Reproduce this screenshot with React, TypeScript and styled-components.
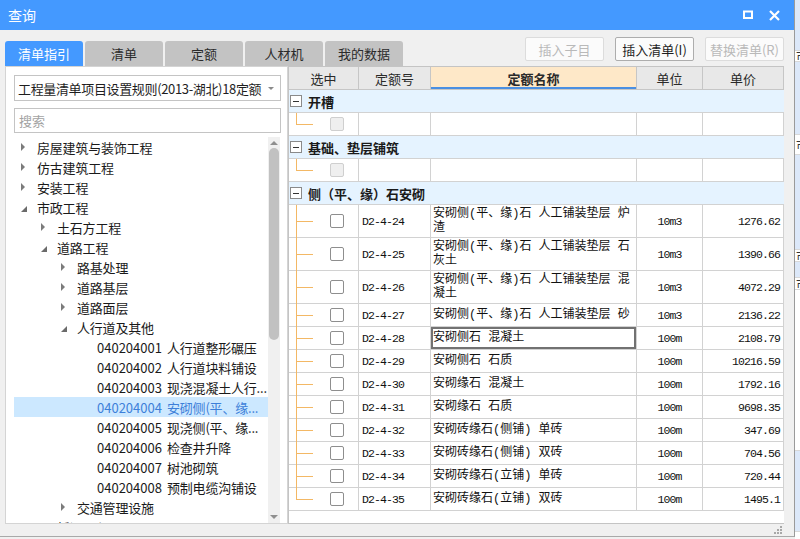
import React from "react";
import styled, { createGlobalStyle } from "styled-components";

const GlobalStyle = createGlobalStyle`
  html, body {
    margin: 0;
    padding: 0;
  }
  body {
    width: 800px;
    height: 539px;
    overflow: hidden;
    background: #f0f0f0;
    font-family: "Noto Sans CJK SC", "Noto Sans", sans-serif;
  }
`;

type TreeItem = {
  level: number;
  label: string;
  code?: string;
  state?: "open" | "closed";
  selected?: boolean;
};

const treeItems: TreeItem[] = [
  { level: 1, label: "房屋建筑与装饰工程", state: "closed" },
  { level: 1, label: "仿古建筑工程", state: "closed" },
  { level: 1, label: "安装工程", state: "closed" },
  { level: 1, label: "市政工程", state: "open" },
  { level: 2, label: "土石方工程", state: "closed" },
  { level: 2, label: "道路工程", state: "open" },
  { level: 3, label: "路基处理", state: "closed" },
  { level: 3, label: "道路基层", state: "closed" },
  { level: 3, label: "道路面层", state: "closed" },
  { level: 3, label: "人行道及其他", state: "open" },
  { level: 4, code: "040204001", label: "人行道整形碾压" },
  { level: 4, code: "040204002", label: "人行道块料铺设" },
  { level: 4, code: "040204003", label: "现浇混凝土人行..." },
  { level: 4, code: "040204004", label: "安砌侧(平、缘...", selected: true },
  { level: 4, code: "040204005", label: "现浇侧(平、缘..." },
  { level: 4, code: "040204006", label: "检查井升降" },
  { level: 4, code: "040204007", label: "树池砌筑" },
  { level: 4, code: "040204008", label: "预制电缆沟铺设" },
  { level: 3, label: "交通管理设施", state: "closed" },
  { level: 2, label: "桥涵工程", state: "closed" },
];

type Quota = {
  code: string;
  name: string[];
  unit: string;
  price: string;
  selected?: boolean;
};

const quotas: Quota[] = [
  { code: "D2-4-24", name: ["安砌侧(平、缘)石 人工铺装垫层 炉", "渣"], unit: "10m3", price: "1276.62" },
  { code: "D2-4-25", name: ["安砌侧(平、缘)石 人工铺装垫层 石", "灰土"], unit: "10m3", price: "1390.66" },
  { code: "D2-4-26", name: ["安砌侧(平、缘)石 人工铺装垫层 混", "凝土"], unit: "10m3", price: "4072.29" },
  { code: "D2-4-27", name: ["安砌侧(平、缘)石 人工铺装垫层 砂"], unit: "10m3", price: "2136.22" },
  { code: "D2-4-28", name: ["安砌侧石 混凝土"], unit: "100m", price: "2108.79", selected: true },
  { code: "D2-4-29", name: ["安砌侧石 石质"], unit: "100m", price: "10216.59" },
  { code: "D2-4-30", name: ["安砌缘石 混凝土"], unit: "100m", price: "1792.16" },
  { code: "D2-4-31", name: ["安砌缘石 石质"], unit: "100m", price: "9698.35" },
  { code: "D2-4-32", name: ["安砌砖缘石(侧铺) 单砖"], unit: "100m", price: "347.69" },
  { code: "D2-4-33", name: ["安砌砖缘石(侧铺) 双砖"], unit: "100m", price: "704.56" },
  { code: "D2-4-34", name: ["安砌砖缘石(立铺) 单砖"], unit: "100m", price: "720.44" },
  { code: "D2-4-35", name: ["安砌砖缘石(立铺) 双砖"], unit: "100m", price: "1495.1" },
];

const COLS = "70px 72px 206px 66px 81px";
const LINE = "#f3b865";

const Screen = styled.div`
  display: flex;
  width: 800px;
  height: 539px;
  overflow: hidden;
`;

const Dialog = styled.div`
  width: 795px;
  height: 537px;
  box-sizing: border-box;
  display: flex;
  flex-direction: column;
  background: #f0f0f0;
  border-right: 1px solid #9a9a9a;
  border-bottom: 1px solid #a9a9a9;
  flex-shrink: 0;
`;

const TitleBar = styled.div`
  height: 30px;
  background: #4499ff;
  display: flex;
  align-items: center;
  padding: 0 8px 0 8px;
  color: #fff;
  font-size: 14px;
`;

const TitleText = styled.span`
  flex: 1;
`;

const TitleButtons = styled.div`
  display: flex;
  gap: 16px;
  align-items: center;
  margin-right: 6px;
`;

const Content = styled.div`
  flex: 1;
  display: flex;
  flex-direction: column;
  padding: 0 10px 0 5px;
`;

const TopRow = styled.div`
  height: 36px;
  display: flex;
`;

const Tabs = styled.div`
  display: flex;
  align-self: flex-end;
  gap: 2px;
`;

const Tab = styled.div<{ $active?: boolean }>`
  width: 78px;
  height: 25px;
  border-radius: 3px 3px 0 0;
  background: ${(p) => (p.$active ? "#4499ff" : "#c3c3c3")};
  color: ${(p) => (p.$active ? "#fff" : "#2b2b2b")};
  font-size: 13px;
  display: flex;
  align-items: center;
  justify-content: center;
`;

const ButtonGroup = styled.div`
  margin-left: auto;
  margin-top: 7px;
  display: flex;
  gap: 11px;
  align-self: flex-start;
`;

const ActionButton = styled.div<{ $disabled?: boolean }>`
  width: 79px;
  height: 24px;
  box-sizing: border-box;
  border: 1px solid ${(p) => (p.$disabled ? "#dcdcdc" : "#adadad")};
  border-radius: 2px;
  background: #fbfbfb;
  color: ${(p) => (p.$disabled ? "#b9b9b9" : "#1e1e1e")};
  font-size: 13px;
  display: flex;
  align-items: center;
  justify-content: center;
`;

const Main = styled.div`
  height: 458px;
  display: flex;
`;

const LeftPanel = styled.div`
  width: 283px;
  box-sizing: border-box;
  background: #fff;
  border: 1px solid #d4d4d4;
  padding: 8px 6px 0 8px;
  display: flex;
  flex-direction: column;
`;

const Combo = styled.div`
  height: 26px;
  box-sizing: border-box;
  border: 1px solid #c4c4c4;
  padding: 0 6px 0 3px;
  display: flex;
  align-items: center;
  font-size: 13px;
  letter-spacing: -0.35px;
  color: #1e1e1e;
  white-space: nowrap;
`;

const ComboText = styled.span`
  flex: 1;
`;

const ComboArrow = styled.span`
  width: 0;
  height: 0;
  border-left: 3px solid transparent;
  border-right: 3px solid transparent;
  border-top: 3px solid #8a8a8a;
`;

const Search = styled.div`
  margin-top: 7px;
  height: 25px;
  box-sizing: border-box;
  border: 1px solid #c4c4c4;
  padding-left: 4px;
  display: flex;
  align-items: center;
  font-size: 13px;
  color: #a3a3a3;
`;

const TreeWrap = styled.div`
  margin-top: 4px;
  flex: 1;
  display: flex;
  overflow: hidden;
`;

const TreeList = styled.div`
  width: 254px;
  overflow: hidden;
`;

const TreeRow = styled.div<{ $level: number; $selected?: boolean }>`
  height: 20px;
  display: flex;
  align-items: center;
  padding-left: ${(p) => 7 + (p.$level - 1) * 20}px;
  background: ${(p) => (p.$selected ? "#cce8ff" : "transparent")};
  color: ${(p) => (p.$selected ? "#3d7fd9" : "#1a1a1a")};
  font-size: 13px;
  white-space: nowrap;
`;

const Toggle = styled.span`
  width: 16px;
  height: 20px;
  display: flex;
  align-items: center;
  flex-shrink: 0;
`;

const Closed = styled.span`
  width: 0;
  height: 0;
  border-top: 4px solid transparent;
  border-bottom: 4px solid transparent;
  border-left: 4px solid #7c7c7c;
`;

const Opened = styled.span`
  width: 0;
  height: 0;
  margin-top: 4px;
  border-left: 6px solid transparent;
  border-bottom: 6px solid #6a6a6a;
`;

const Code = styled.span`
  width: 70px;
  flex-shrink: 0;
`;

const Label = styled.span`
  letter-spacing: -0.2px;
`;

const ScrollBar = styled.div`
  width: 12px;
  background: #f0f0f0;
  display: flex;
  flex-direction: column;
  align-items: center;
`;

const ScrollArrow = styled.span<{ $down?: boolean }>`
  margin: ${(p) => (p.$down ? "auto 0 4px" : "4px 0 0")};
  width: 0;
  height: 0;
  border-left: 4px solid transparent;
  border-right: 4px solid transparent;
  ${(p) =>
    p.$down ? "border-top: 4px solid #8f8f8f;" : "border-bottom: 4px solid #8f8f8f;"}
`;

const ScrollThumb = styled.div`
  margin-top: 3px;
  width: 10px;
  height: 192px;
  border-radius: 5px;
  background: #c1c1c1;
`;

const Table = styled.div`
  width: 496px;
  box-sizing: border-box;
  background: #fff;
  border: 1px solid #c4c4c4;
  border-right: none;
  overflow: hidden;
`;

const HeaderRow = styled.div`
  display: grid;
  grid-template-columns: ${COLS};
  height: 23px;
  box-sizing: border-box;
  border-bottom: 1px solid #c6c6c6;
`;

const HeaderCell = styled.div<{ $hot?: boolean }>`
  border-right: 1px solid #c6c6c6;
  background: ${(p) => (p.$hot ? "#fee8c8" : "#e8e8e8")};
  box-shadow: ${(p) => (p.$hot ? "inset 0 -2px 0 #4a8fe2" : "none")};
  font-size: 13px;
  font-weight: ${(p) => (p.$hot ? 700 : 400)};
  color: #2a2a2a;
  display: flex;
  align-items: center;
  justify-content: center;
`;

const GroupRow = styled.div`
  height: 23px;
  box-sizing: border-box;
  background: #e5f3ff;
  border-bottom: 1px solid #d2d2d2;
  display: flex;
  align-items: center;
  padding-left: 1px;
  font-size: 13px;
  font-weight: 700;
  color: #1a1a1a;
`;

const MinusBox = styled.span`
  width: 12px;
  height: 12px;
  box-sizing: border-box;
  border: 1px solid #8a8a8a;
  background: #fff;
  margin-right: 6px;
  display: flex;
  align-items: center;
  justify-content: center;
  &::before {
    content: "";
    width: 6px;
    height: 1px;
    background: #333;
  }
`;

const DataRow = styled.div<{ $tall?: boolean }>`
  display: grid;
  grid-template-columns: ${COLS};
  height: ${(p) => (p.$tall ? 33 : 23)}px;
  box-sizing: border-box;
  border-bottom: 1px solid #d2d2d2;
`;

const Cell = styled.div`
  border-right: 1px solid #d2d2d2;
  display: flex;
  align-items: center;
  overflow: hidden;
  white-space: nowrap;
`;

const PickCell = styled(Cell)<{ $last?: boolean }>`
  position: relative;
  overflow: visible;
  padding-left: 41px;
  &::before {
    content: "";
    position: absolute;
    left: 7px;
    top: 0;
    bottom: ${(p) => (p.$last ? "50%" : "-1px")};
    width: 1px;
    background: ${LINE};
  }
  &::after {
    content: "";
    position: absolute;
    left: 7px;
    top: 50%;
    width: 17px;
    height: 1px;
    background: ${LINE};
  }
`;

const Check = styled.span<{ $disabled?: boolean }>`
  width: 14px;
  height: 14px;
  box-sizing: border-box;
  border: 1px solid ${(p) => (p.$disabled ? "#cfcfcf" : "#8e8e8e")};
  border-radius: 2px;
  background: ${(p) => (p.$disabled ? "#efefef" : "#fff")};
`;

const MonoCell = styled(Cell)<{ $align?: "left" | "center" | "right" }>`
  font-family: "Liberation Mono", monospace;
  font-size: 11.5px;
  letter-spacing: -0.9px;
  color: #111;
  justify-content: ${(p) =>
    p.$align === "center" ? "center" : p.$align === "right" ? "flex-end" : "flex-start"};
  padding: 0 3px 0 3px;
`;

const NameCell = styled(Cell)<{ $multi?: boolean; $focus?: boolean }>`
  flex-direction: column;
  align-items: flex-start;
  justify-content: ${(p) => (p.$multi ? "flex-start" : "center")};
  padding: ${(p) => (p.$multi ? "2px 0 0 2px" : "0 0 0 2px")};
  font-family: "Liberation Mono", "Noto Sans CJK SC", monospace;
  font-size: 12px;
  line-height: 14px;
  color: #111;
  box-shadow: ${(p) => (p.$focus ? "inset 0 0 0 2px #727272" : "none")};
`;

const Footer = styled.div`
  flex: 1;
  display: flex;
  justify-content: flex-end;
  align-items: flex-end;
  padding: 0 2px 2px 0;
`;

const Backdrop = styled.div`
  flex: 1;
  background: #fff;
  display: flex;
  flex-direction: column;
  overflow: hidden;
`;

const BackBlock = styled.div<{ $h: number; $blue?: boolean }>`
  height: ${(p) => p.$h}px;
  flex-shrink: 0;
  background: ${(p) => (p.$blue ? "#dce8f9" : "#fff")};
  border-bottom: 1px solid #d8d8d8;
  font-size: 12px;
  line-height: ${(p) => p.$h}px;
  color: #333;
  padding-left: 1px;
  overflow: hidden;
  white-space: nowrap;
`;

function TreeToggle({ state }: { state?: "open" | "closed" }) {
  return (
    <Toggle>
      {state === "closed" && <Closed />}
      {state === "open" && <Opened />}
    </Toggle>
  );
}

function Group({ title }: { title: string }) {
  return (
    <GroupRow>
      <MinusBox />
      {title}
    </GroupRow>
  );
}

function EmptyRow() {
  return (
    <DataRow>
      <PickCell $last>
        <Check $disabled />
      </PickCell>
      <Cell />
      <Cell />
      <Cell />
      <Cell />
    </DataRow>
  );
}

export default function App() {
  return (
    <>
      <GlobalStyle />
      <Screen>
        <Dialog>
          <TitleBar>
            <TitleText>查询</TitleText>
            <TitleButtons>
              <svg width="10" height="10" viewBox="0 0 10 10">
                <rect x="1" y="1.5" width="8" height="6.5" fill="none" stroke="#fff" strokeWidth="2" />
              </svg>
              <svg width="11" height="11" viewBox="0 0 11 11">
                <path d="M1 1 L10 10 M10 1 L1 10" stroke="#fff" strokeWidth="2.2" />
              </svg>
            </TitleButtons>
          </TitleBar>
          <Content>
            <TopRow>
              <Tabs>
                <Tab $active>清单指引</Tab>
                <Tab>清单</Tab>
                <Tab>定额</Tab>
                <Tab>人材机</Tab>
                <Tab>我的数据</Tab>
              </Tabs>
              <ButtonGroup>
                <ActionButton $disabled>插入子目</ActionButton>
                <ActionButton>插入清单(I)</ActionButton>
                <ActionButton $disabled>替换清单(R)</ActionButton>
              </ButtonGroup>
            </TopRow>
            <Main>
              <LeftPanel>
                <Combo>
                  <ComboText>工程量清单项目设置规则(2013-湖北)18定额</ComboText>
                  <ComboArrow />
                </Combo>
                <Search>搜索</Search>
                <TreeWrap>
                  <TreeList>
                    {treeItems.map((item, i) => (
                      <TreeRow key={i} $level={item.level} $selected={item.selected}>
                        <TreeToggle state={item.state} />
                        {item.code && <Code>{item.code}</Code>}
                        <Label>{item.label}</Label>
                      </TreeRow>
                    ))}
                  </TreeList>
                  <ScrollBar>
                    <ScrollArrow />
                    <ScrollThumb />
                    <ScrollArrow $down />
                  </ScrollBar>
                </TreeWrap>
              </LeftPanel>
              <Table>
                <HeaderRow>
                  <HeaderCell>选中</HeaderCell>
                  <HeaderCell>定额号</HeaderCell>
                  <HeaderCell $hot>定额名称</HeaderCell>
                  <HeaderCell>单位</HeaderCell>
                  <HeaderCell>单价</HeaderCell>
                </HeaderRow>
                <Group title="开槽" />
                <EmptyRow />
                <Group title="基础、垫层铺筑" />
                <EmptyRow />
                <Group title="侧（平、缘）石安砌" />
                {quotas.map((q, i) => (
                  <DataRow key={q.code} $tall={q.name.length > 1}>
                    <PickCell $last={i === quotas.length - 1}>
                      <Check />
                    </PickCell>
                    <MonoCell>{q.code}</MonoCell>
                    <NameCell $multi={q.name.length > 1} $focus={q.selected}>
                      {q.name.map((line) => (
                        <span key={line}>{line}</span>
                      ))}
                    </NameCell>
                    <MonoCell $align="center">{q.unit}</MonoCell>
                    <MonoCell $align="right">{q.price}</MonoCell>
                  </DataRow>
                ))}
              </Table>
            </Main>
            <Footer>
              <svg width="8" height="8" viewBox="0 0 8 8">
                <g fill="#a8a8a8">
                  <rect x="6" y="0" width="2" height="2" />
                  <rect x="3" y="3" width="2" height="2" />
                  <rect x="6" y="3" width="2" height="2" />
                  <rect x="0" y="6" width="2" height="2" />
                  <rect x="3" y="6" width="2" height="2" />
                  <rect x="6" y="6" width="2" height="2" />
                </g>
              </svg>
            </Footer>
          </Content>
        </Dialog>
        <Backdrop>
          <BackBlock $h={50} $blue />
          <BackBlock $h={10}>市</BackBlock>
          <BackBlock $h={72} $blue />
          <BackBlock $h={19}>市</BackBlock>
          <BackBlock $h={94} $blue />
          <BackBlock $h={11}>市</BackBlock>
          <BackBlock $h={15} $blue />
          <BackBlock $h={11}>市</BackBlock>
          <BackBlock $h={160} />
          <BackBlock $h={80} $blue />
        </Backdrop>
      </Screen>
    </>
  );
}
